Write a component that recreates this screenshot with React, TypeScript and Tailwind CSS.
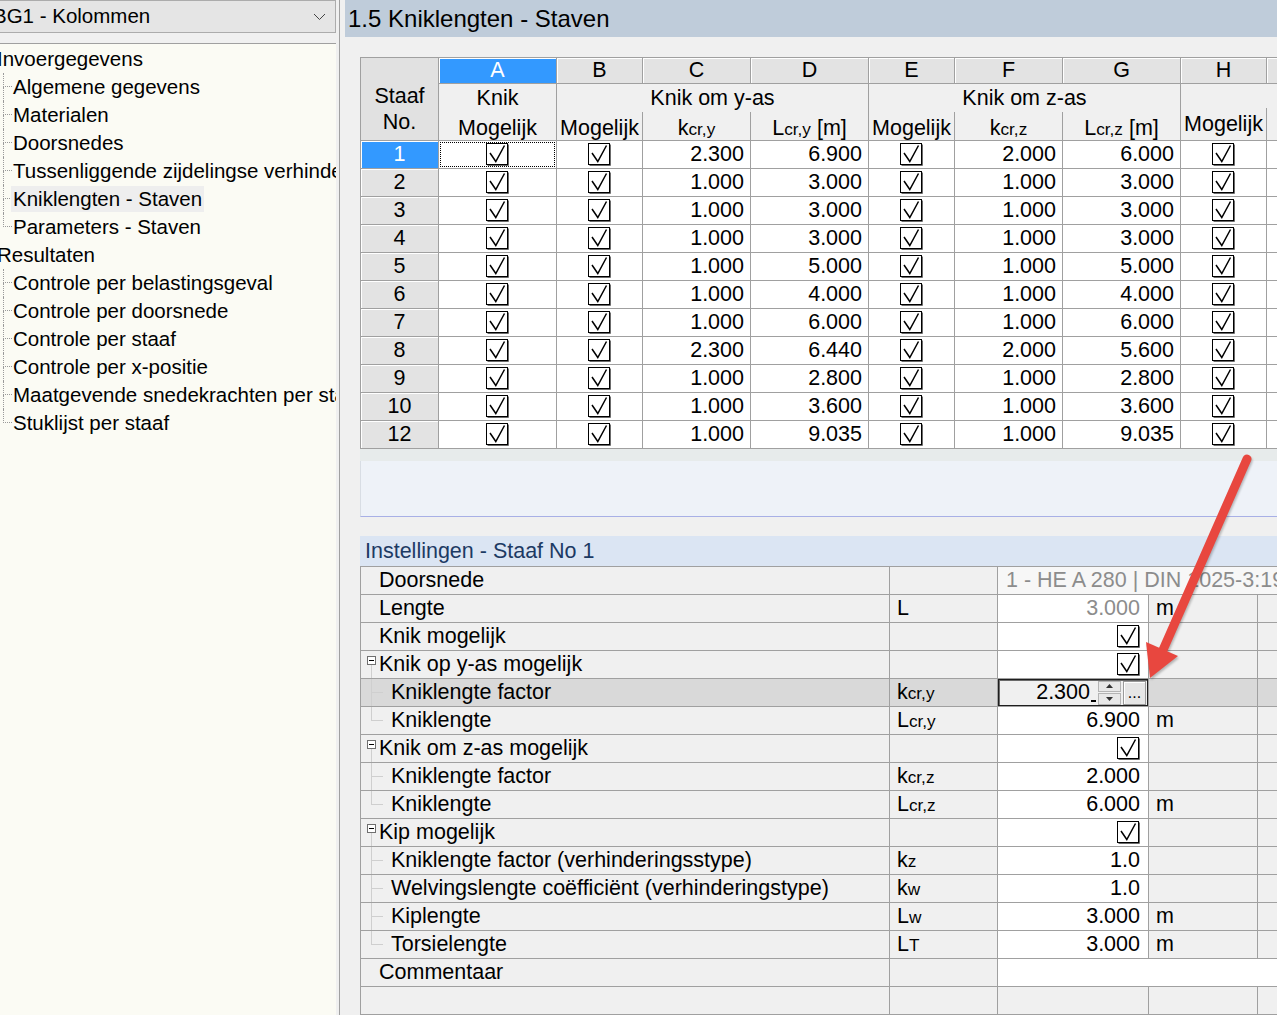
import React from 'react';

const line = 'border-[#a0a0a0]';

function Check() {
  return (
    <svg width="23" height="23" viewBox="0 0 23 23" className="shrink-0">
      <rect x="0.5" y="0.5" width="21" height="21" fill="#fff" stroke="#000" />
      <path d="M22.5 1.5V22.5H1.5" fill="none" stroke="#6b6b6b" />
      <path d="M4 10L9.8 18.5L18.5 2.5" fill="none" stroke="#000" strokeWidth="1.5" />
    </svg>
  );
}

function Sub({ b, s, tail }: { b: string; s: string; tail?: string }) {
  return (
    <span className="whitespace-nowrap">
      {b}
      <span className="text-[0.8em]">{s}</span>
      {tail}
    </span>
  );
}

const tree = [
  { t: 'Invoergegevens', root: true },
  { t: 'Algemene gegevens' },
  { t: 'Materialen' },
  { t: 'Doorsnedes' },
  { t: 'Tussenliggende zijdelingse verhinderingen' },
  { t: 'Kniklengten - Staven', sel: true },
  { t: 'Parameters - Staven', last: true },
  { t: 'Resultaten', root: true },
  { t: 'Controle per belastingsgeval' },
  { t: 'Controle per doorsnede' },
  { t: 'Controle per staaf' },
  { t: 'Controle per x-positie' },
  { t: 'Maatgevende snedekrachten per staaf' },
  { t: 'Stuklijst per staaf', last: true },
];

function Sidebar() {
  return (
    <aside className="w-[336px] shrink-0 flex flex-col text-[20.5px]">
      <div className="h-[33px] border-y border-r border-[#acacac] bg-[#e5e5e5] flex items-center overflow-hidden">
        <span className="ml-[-7px] whitespace-nowrap">BG1 - Kolommen</span>
        <svg width="13" height="8" viewBox="0 0 13 8" className="ml-auto mr-[9px]">
          <path d="M1 1L6.5 6.5L12 1" fill="none" stroke="#444" />
        </svg>
      </div>
      <div className="h-[10px] bg-[#f0f0f0]" />
      <div className="h-px bg-[#a0a0a0]" />
      <div className="flex-1 bg-[#fbfbf4] pt-[1px] overflow-hidden">
        {tree.map((n, i) =>
          n.root ? (
            <div key={i} className="h-[28px] flex items-center ml-[-3px] whitespace-nowrap">
              {n.t}
            </div>
          ) : (
            <div key={i} className="h-[28px] flex items-stretch whitespace-nowrap">
              <div className="ml-[3px] w-[9px] shrink-0 flex flex-col">
                <div className="h-[14px] border-l border-b border-dotted border-[#9a9a9a]" />
                <div className={`flex-1 ${n.last ? '' : 'border-l border-dotted border-[#9a9a9a]'}`} />
              </div>
              <span
                className={`self-center ml-[-1px] px-[2px] leading-[26px] ${n.sel ? 'bg-[#eeeeee]' : ''}`}
              >
                {n.t}
              </span>
            </div>
          ),
        )}
      </div>
    </aside>
  );
}

const letters = [
  { l: 'A', w: 'w-[118px]', sel: true },
  { l: 'B', w: 'w-[86px]' },
  { l: 'C', w: 'w-[108px]' },
  { l: 'D', w: 'w-[118px]' },
  { l: 'E', w: 'w-[86px]' },
  { l: 'F', w: 'w-[108px]' },
  { l: 'G', w: 'w-[118px]' },
  { l: 'H', w: 'w-[86px]' },
  { l: '', w: 'w-[40px]' },
];

const dataRows = [
  ['1', '2.300', '6.900', '2.000', '6.000'],
  ['2', '1.000', '3.000', '1.000', '3.000'],
  ['3', '1.000', '3.000', '1.000', '3.000'],
  ['4', '1.000', '3.000', '1.000', '3.000'],
  ['5', '1.000', '5.000', '1.000', '5.000'],
  ['6', '1.000', '4.000', '1.000', '4.000'],
  ['7', '1.000', '6.000', '1.000', '6.000'],
  ['8', '2.300', '6.440', '2.000', '5.600'],
  ['9', '1.000', '2.800', '1.000', '2.800'],
  ['10', '1.000', '3.600', '1.000', '3.600'],
  ['12', '1.000', '9.035', '1.000', '9.035'],
];

function CheckCell({ w, focus }: { w: string; focus?: boolean }) {
  return (
    <div className={`${w} h-full border-r border-b ${line} bg-white flex items-center justify-center p-px`}>
      <div
        className={`w-full h-full flex items-center justify-center ${focus ? 'border border-dotted border-black' : ''}`}
      >
        <Check />
      </div>
    </div>
  );
}

function NumCell({ w, v }: { w: string; v: string }) {
  return (
    <div className={`${w} h-full border-r border-b ${line} bg-white flex items-center justify-end pr-[6px]`}>
      {v}
    </div>
  );
}

function KnikTable() {
  return (
    <div className="ml-[15px] mt-[20px] w-max text-[21.5px]">
      <div className={`flex border-t border-l ${line}`}>
        <div
          className={`w-[78px] h-[83px] bg-[#e1e1e1] border-r border-b ${line} flex flex-col items-center pt-[25px] leading-[26px]`}
        >
          <span>Staaf</span>
          <span>No.</span>
        </div>
        <div className="flex flex-col">
          <div className="flex h-[26px]">
            {letters.map((c, i) => (
              <div
                key={i}
                className={`${c.w} h-full border-r border-b ${line} flex items-center justify-center shadow-[inset_1px_1px_0_#fff] ${
                  c.sel ? 'bg-[#3399ff] text-white' : 'bg-[#e3e3e3]'
                }`}
              >
                {c.l}
              </div>
            ))}
          </div>
          <div className="flex h-[57px] bg-[#f0f0f0]">
            <div className={`w-[118px] border-r border-b ${line} flex flex-col items-center`}>
              <div className="h-[28px] flex items-center">Knik</div>
              <div className="flex-1 flex items-center">Mogelijk</div>
            </div>
            {[
              ['Knik om y-as', 'y'],
              ['Knik om z-as', 'z'],
            ].map(([g, ax]) => (
              <div key={ax} className={`w-[312px] border-r border-b ${line} flex flex-col`}>
                <div className="h-[28px] flex items-center justify-center">{g}</div>
                <div className="flex-1 flex">
                  <div className={`w-[86px] border-r ${line} flex items-center justify-center`}>Mogelijk</div>
                  <div className={`w-[108px] border-r ${line} flex items-center justify-center`}>
                    <Sub b="k" s={`cr,${ax}`} />
                  </div>
                  <div className="flex-1 flex items-center justify-center">
                    <Sub b="L" s={`cr,${ax}`} tail=" [m]" />
                  </div>
                </div>
              </div>
            ))}
            <div className={`w-[126px] border-r border-b ${line} flex flex-col`}>
              <div className="h-[28px]" />
              <div className="flex-1 flex">
                <div className={`w-[86px] border-r ${line} flex items-center justify-center`}>Mogelijk</div>
                <div className="flex-1" />
              </div>
            </div>
          </div>
        </div>
      </div>
      {dataRows.map((r, i) => (
        <div key={i} className={`flex h-[28px] border-l ${line}`}>
          <div
            className={`w-[78px] h-full border-r border-b ${line} flex items-center justify-center shadow-[inset_1px_1px_0_#fff] ${
              i === 0 ? 'bg-[#3399ff] text-white' : 'bg-[#e3e3e3]'
            }`}
          >
            {r[0]}
          </div>
          <CheckCell w="w-[118px]" focus={i === 0} />
          <CheckCell w="w-[86px]" />
          <NumCell w="w-[108px]" v={r[1]} />
          <NumCell w="w-[118px]" v={r[2]} />
          <CheckCell w="w-[86px]" />
          <NumCell w="w-[108px]" v={r[3]} />
          <NumCell w="w-[118px]" v={r[4]} />
          <CheckCell w="w-[86px]" />
          <div className={`w-[40px] h-full border-r border-b ${line} bg-white`} />
        </div>
      ))}
    </div>
  );
}

type SRow = {
  label: string;
  kind: 'root' | 'group' | 'child';
  last?: boolean;
  sym?: React.ReactNode;
  val?: string;
  gray?: boolean;
  check?: boolean;
  unit?: string;
  hl?: boolean;
  edit?: boolean;
  span?: 'info' | 'comment' | 'none';
};

const settings: SRow[] = [
  { label: 'Doorsnede', kind: 'root', span: 'info' },
  { label: 'Lengte', kind: 'root', sym: 'L', val: '3.000', gray: true, unit: 'm' },
  { label: 'Knik mogelijk', kind: 'root', check: true },
  { label: 'Knik op y-as mogelijk', kind: 'group', check: true },
  { label: 'Kniklengte factor', kind: 'child', sym: <Sub b="k" s="cr,y" />, edit: true, hl: true },
  { label: 'Kniklengte', kind: 'child', last: true, sym: <Sub b="L" s="cr,y" />, val: '6.900', unit: 'm' },
  { label: 'Knik om z-as mogelijk', kind: 'group', check: true },
  { label: 'Kniklengte factor', kind: 'child', sym: <Sub b="k" s="cr,z" />, val: '2.000' },
  { label: 'Kniklengte', kind: 'child', last: true, sym: <Sub b="L" s="cr,z" />, val: '6.000', unit: 'm' },
  { label: 'Kip mogelijk', kind: 'group', check: true },
  { label: 'Kniklengte factor (verhinderingsstype)', kind: 'child', sym: <Sub b="k" s="z" />, val: '1.0' },
  { label: 'Welvingslengte coëfficiënt (verhinderingstype)', kind: 'child', sym: <Sub b="k" s="w" />, val: '1.0' },
  { label: 'Kiplengte', kind: 'child', sym: <Sub b="L" s="w" />, val: '3.000', unit: 'm' },
  { label: 'Torsielengte', kind: 'child', last: true, sym: <Sub b="L" s="T" />, val: '3.000', unit: 'm' },
  { label: 'Commentaar', kind: 'root', span: 'comment' },
  { label: '', kind: 'root', span: 'none' },
];

function MinusBox() {
  return (
    <svg width="9" height="9" viewBox="0 0 9 9">
      <rect x="0.5" y="0.5" width="8" height="8" fill="#fff" stroke="#6f6f6f" />
      <path d="M2 4.5H7" stroke="#000" />
    </svg>
  );
}

function EditBox() {
  return (
    <div className="flex-1 h-full flex items-center border border-[#1e1e1e] shadow-[inset_1px_1px_0_#6a6a6a] bg-[#f0f0f0]">
      <span className="flex-1 text-right">2.300</span>
      <span className="w-[5px] h-[2px] bg-black self-end mb-[3px] ml-px" />
      <div className="ml-[2px] w-[23px] h-[24px] flex flex-col gap-px">
        <div className="flex-1 bg-[#e8e8e8] border border-[#b4b4b4] flex items-center justify-center">
          <svg width="7" height="4" viewBox="0 0 7 4">
            <path d="M0 4L3.5 0L7 4Z" fill="#333" />
          </svg>
        </div>
        <div className="flex-1 bg-[#e8e8e8] border border-[#b4b4b4] flex items-center justify-center">
          <svg width="7" height="4" viewBox="0 0 7 4">
            <path d="M0 0L3.5 4L7 0Z" fill="#333" />
          </svg>
        </div>
      </div>
      <div className="ml-[2px] mr-px w-[23px] h-[24px] bg-[#e6e6e6] border border-[#9a9a9a] shadow-[inset_1px_1px_0_#fff] flex items-end justify-center leading-none pb-[3px] text-[16px]">
        ...
      </div>
    </div>
  );
}

function Settings() {
  return (
    <div className={`ml-[15px] border-t border-l ${line} text-[21.5px]`}>
      {settings.map((r, i) => {
        const bg = r.hl ? 'bg-[#d9d9d9]' : 'bg-[#f0f0f0]';
        return (
          <div key={i} className="flex h-[28px]">
            <div className={`w-[529px] shrink-0 h-full border-r border-b ${line} ${bg} flex items-stretch whitespace-nowrap`}>
              {r.kind === 'root' && <span className="self-center pl-[18px]">{r.label}</span>}
              {r.kind === 'group' && (
                <>
                  <div className="ml-[6px] w-[9px] flex flex-col items-center pt-[5px]">
                    <MinusBox />
                    <div className="flex-1 w-px bg-[#cfcfcf]" />
                  </div>
                  <span className="self-center ml-[3px]">{r.label}</span>
                </>
              )}
              {r.kind === 'child' && (
                <>
                  <div className="ml-[10px] w-[12px] flex flex-col">
                    <div className="h-[14px] border-l border-b border-[#cfcfcf]" />
                    <div className={`flex-1 ${r.last ? '' : 'border-l border-[#cfcfcf]'}`} />
                  </div>
                  <span className="self-center ml-[8px]">{r.label}</span>
                </>
              )}
            </div>
            <div className={`w-[108px] shrink-0 h-full border-r border-b ${line} ${bg} flex items-center pl-[7px]`}>
              {r.sym}
            </div>
            {r.span === 'info' || r.span === 'comment' ? (
              <div
                className={`flex-1 min-w-0 h-full border-b ${line} ${
                  r.span === 'comment' ? 'bg-white' : 'bg-[#f7f7f7]'
                } flex items-center pl-[8px] whitespace-nowrap overflow-hidden text-[#8c8c8c]`}
              >
                {r.span === 'info' ? '1 - HE A 280 | DIN 1025-3:1994' : ''}
              </div>
            ) : (
              <>
                <div
                  className={`w-[151px] shrink-0 h-full border-r border-b ${line} ${
                    r.span === 'none' ? 'bg-[#f0f0f0]' : 'bg-white'
                  } flex items-center justify-end ${r.edit ? '' : 'pr-[8px]'} ${r.gray ? 'text-[#8c8c8c]' : ''}`}
                >
                  {r.edit ? <EditBox /> : r.check ? <Check /> : r.val}
                </div>
                <div className={`w-[109px] shrink-0 h-full border-r border-b ${line} ${bg} flex items-center pl-[7px]`}>
                  {r.unit}
                </div>
                <div className={`flex-1 h-full border-b ${line} ${bg}`} />
              </>
            )}
          </div>
        );
      })}
    </div>
  );
}

export default function App() {
  return (
    <div className="relative w-[1277px] h-[1015px] overflow-hidden flex bg-[#f0f0f0] text-black font-['Liberation_Sans',Arial,sans-serif]">
      <Sidebar />
      <div className="w-[3px] shrink-0 bg-[#f0f0f0]" />
      <div className="w-px shrink-0 bg-[#a0a0a0]" />
      <main className="flex-1 min-w-0 pl-[5px] flex flex-col overflow-hidden">
        <div className="h-[37px] shrink-0 bg-[#bfccda] flex items-center pl-[3px] text-[24px] whitespace-nowrap">
          1.5 Kniklengten - Staven
        </div>
        <KnikTable />
        <div className="ml-[15px] h-[12px] shrink-0 bg-[#e7ebeb]" />
        <div className="ml-[15px] h-[56px] shrink-0 bg-[#eef2f8] border-l border-b border-l-[#d8dde4] border-b-[#a8b0e6]" />
        <div className="ml-[15px] mt-[19px] h-[30px] shrink-0 bg-[#dbe5f3] text-[#1d3a63] text-[21.5px] flex items-center pl-[5px]">
          Instellingen - Staaf No 1
        </div>
        <Settings />
      </main>
      <svg
        className="absolute inset-0 pointer-events-none drop-shadow-[1px_2px_1px_rgba(0,0,0,0.25)]"
        width="1277"
        height="1015"
        viewBox="0 0 1277 1015"
      >
        <line x1="1247" y1="459" x2="1163" y2="650" stroke="#e8473f" strokeWidth="9" strokeLinecap="round" />
        <polygon points="1150,678 1146,642 1178,656" fill="#e8473f" />
      </svg>
    </div>
  );
}
